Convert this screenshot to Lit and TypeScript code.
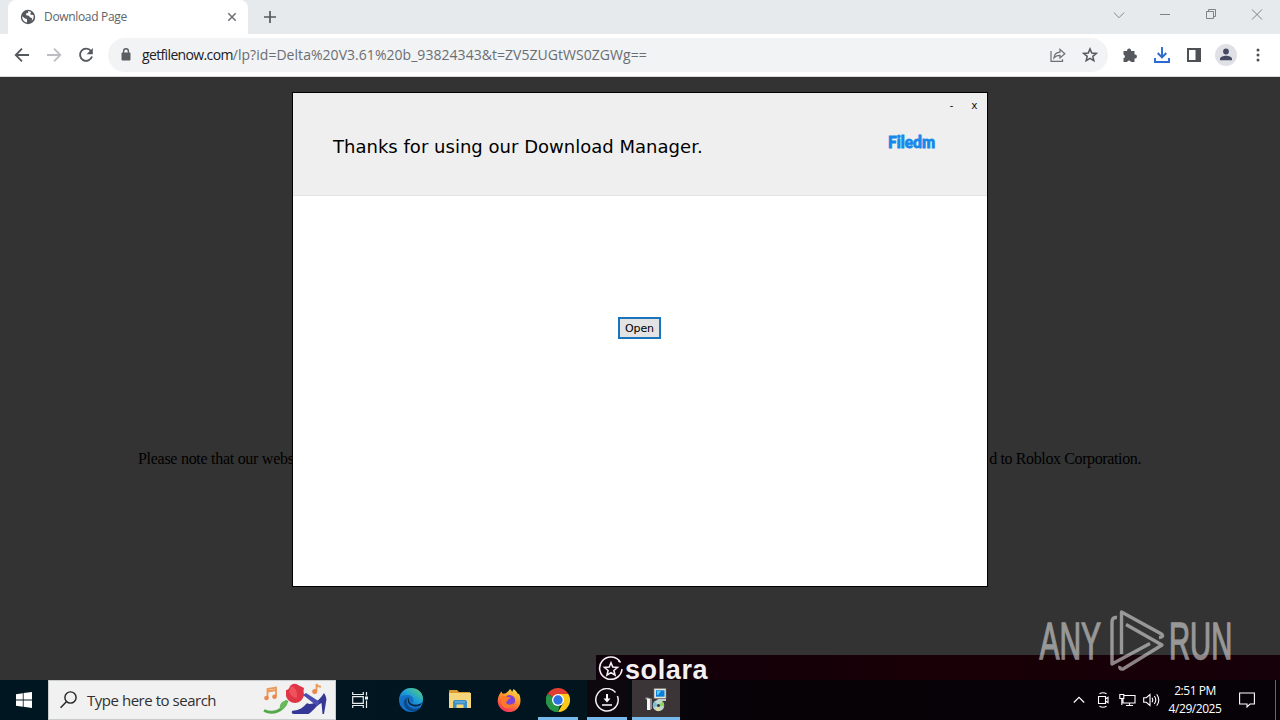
import { LitElement, html, css, svg } from "lit";
import { customElement } from "lit/decorators.js";

@customElement("browser-chrome")
class BrowserChrome extends LitElement {
  static styles = css`
    :host { display: block; font-family: "Open Sans", "Noto Sans", sans-serif; }
    svg { display: block; }
    .tabs { height: 34px; background: #e7eaed; display: flex; padding-left: 8px; }
    .tab { width: 240px; box-sizing: border-box; background: #fff; border-radius: 8px 8px 0 0; display: flex; align-items: center; padding: 0 8px 0 12px; }
    .title { margin-left: 8px; flex: 1; font-size: 12px; line-height: 16px; letter-spacing: -0.33px; color: #606368; white-space: nowrap; }
    .plus { width: 44px; display: grid; place-items: center; }
    .grow { flex: 1; }
    .ctl { width: 46px; height: 29px; display: grid; place-items: center; }
    .bar { height: 43px; box-sizing: border-box; background: #fff; border-bottom: 1px solid #d8dadd; display: flex; align-items: center; padding: 0 6px; }
    .cell { width: 32px; height: 32px; display: grid; place-items: center; flex: none; }
    .omni { margin: 0 6px; height: 34px; flex: 1; border-radius: 17px; background: #f1f3f4; display: flex; align-items: center; padding: 0 2px 0 12px; }
    .url { flex: 1; margin-left: 10px; font-size: 14px; line-height: 20px; color: #6a6e73; white-space: nowrap; }
    .host { color: #202124; letter-spacing: -0.64px; }
    .path { letter-spacing: 0.04px; }
  `;
  render() {
    return html`
      <div class="tabs">
        <div class="tab">
          <svg width="16" height="16" viewBox="0 0 16 16"><circle cx="8" cy="8" r="7.2" fill="#55595e"/><path d="M2.3 7.3L5 9.6 7 10v3.4C4 13.2 2 10.500 2.300 7.300zM8.300 2.100L8 4 6 4.600 6.200 6.300 8.800 6.800 10.200 8.500 12.200 9.200 11.600 11.800C13.400 10.500 14 8.300 13.400 6L10.800 5.800 10.300 4.500 11.200 3z" fill="#fff"/></svg>
          <div class="title">Download Page</div>
          <svg width="16" height="16" viewBox="0 0 16 16" stroke="#6b6f74" stroke-width="1.5"><path d="M4.300 4.300l7.400 7.400M11.700 4.300l-7.400 7.400"/></svg>
        </div>
        <div class="plus"><svg width="14" height="14" viewBox="0 0 14 14" stroke="#55595e" stroke-width="1.7"><path d="M7 1v12M1 7h12"/></svg></div>
        <div class="grow"></div>
        <div class="ctl"><svg width="12" height="12" viewBox="0 0 12 12" stroke="#85888c" fill="none"><path d="M.8 3.500l5.200 5.200 5.200-5.200"/></svg></div>
        <div class="ctl"><svg width="12" height="12" viewBox="0 0 12 12" stroke="#7e8185"><path d="M1 5.500h10"/></svg></div>
        <div class="ctl"><svg width="12" height="12" viewBox="0 0 12 12" stroke="#7e8185" fill="none"><path d="M1.500 2.500h7v7h-7zM3.500 2.500v-2h7v7h-2"/></svg></div>
        <div class="ctl"><svg width="12" height="12" viewBox="0 0 12 12" stroke="#7e8185"><path d="M1 .5l10 10M11 .5L1 10.500"/></svg></div>
      </div>
      <div class="bar">
        <div class="cell"><svg width="16" height="16" viewBox="0 0 16 16" fill="none" stroke="#55595e" stroke-width="1.800"><path d="M15 8H2M8 1.700L1.700 8 8 14.300"/></svg></div>
        <div class="cell"><svg width="16" height="16" viewBox="0 0 16 16" fill="none" stroke="#bcbec1" stroke-width="1.800"><path d="M1 8h13M8 1.700L14.300 8 8 14.300"/></svg></div>
        <div class="cell"><svg width="16" height="16" viewBox="0 0 16 16"><path d="M13 4A6.100 6.100 0 1 0 14 9.500" fill="none" stroke="#55595e" stroke-width="1.900"/><path d="M14.800 1v6.200H8.600z" fill="#55595e"/></svg></div>
        <div class="omni">
          <svg width="12" height="16" viewBox="0 0 12 16"><rect x="1.500" y="5.500" width="9" height="8" rx="1" fill="#5a5e63"/><path d="M3.600 6V4.200a2.400 2.400 0 0 1 4.800 0V6" fill="none" stroke="#5a5e63" stroke-width="1.400"/></svg>
          <div class="url"><span class="host">getfilenow.com</span><span class="path">/lp?id=Delta%20V3.61%20b_93824343&amp;t=ZV5ZUGtWS0ZGWg==</span></div>
          <div class="cell"><svg width="16" height="16" viewBox="0 0 16 16" fill="none" stroke="#6b6f74" stroke-width="1.200"><path d="M1 4v10.300h11.500v-2"/><path d="M4 11c.3-4 2.500-5.800 6-5.900V2.400l4.800 4.300L10 11V8.300C7.200 8.300 5.500 9 4 11z"/></svg></div>
          <div class="cell"><svg width="16" height="16" viewBox="0 0 16 16" fill="none" stroke="#55595e" stroke-width="1.500"><path d="M8 1.900l1.750 4.150 4.450.4-3.400 2.900 1.050 4.350L8 11.400l-3.850 2.300L5.200 9.350 1.800 6.450l4.450-.4z"/></svg></div>
        </div>
        <div class="cell"><svg width="16" height="16" viewBox="0 0 16 16" fill="#55595e"><path d="M1.500 4h3.700a2 2 0 1 1 3.800 0h3.500v3.500a2 2 0 1 1 0 3.900V15H9a2 2 0 0 0-3.900 0H1.500v-3.700a2 2 0 0 0 0-3.800z"/></svg></div>
        <div class="cell"><svg width="18" height="18" viewBox="0 0 18 18" fill="none" stroke="#2b68d0" stroke-width="1.900"><path d="M9 1v10M4.700 7L9 11.300 13.300 7M2 12v4h14v-4"/></svg></div>
        <div class="cell"><svg width="14" height="14" viewBox="0 0 14 14"><path d="M1 1h12v12H1z" fill="none" stroke="#4d5156" stroke-width="2"/><path d="M8.500 1H13v12H8.500z" fill="#4d5156"/></svg></div>
        <div class="cell"><svg width="22" height="22" viewBox="0 0 22 22"><circle cx="11" cy="11" r="11" fill="#dfe1e6"/><circle cx="11" cy="7.500" r="2.900" fill="#474b61"/><path d="M5 16.200v-1.300c0-2 3.500-3.200 6-3.200s6 1.200 6 3.200v1.300z" fill="#474b61"/></svg></div>
        <div class="cell"><svg width="4" height="14" viewBox="0 0 4 14" fill="#4d5156"><circle cx="2" cy="2" r="1.500"/><circle cx="2" cy="7" r="1.500"/><circle cx="2" cy="12" r="1.500"/></svg></div>
      </div>`;
  }
}

@customElement("download-dialog")
class DownloadDialog extends LitElement {
  static styles = css`
    :host { display: flex; flex-direction: column; box-sizing: border-box; border: 1px solid #000; background: #fff; font-family: "DejaVu Sans", sans-serif; color: #000; }
    .head { height: 103px; box-sizing: border-box; background: #efefef; border-bottom: 1px solid #e2e2e2; }
    .controls { display: flex; justify-content: flex-end; height: 22px; padding-right: 1px; margin-bottom: 2px; align-items: center; font-size: 11px; font-family: "Open Sans", sans-serif; }
    .controls span { width: 23px; text-align: center; }
    .row { display: flex; justify-content: space-between; padding: 0 50px 0 40px; height: 60px; }
    .title { font-size: 18px; line-height: 24px; padding-top: 18px; white-space: nowrap; letter-spacing: 0.02px; }
    .logo { display: block; margin-top: 10px; overflow: visible; }
    .body { flex: 1; display: flex; justify-content: center; align-items: flex-start; padding-top: 121px; }
    .open { box-sizing: border-box; width: 43px; height: 22px; margin-right: 1px; padding: 1px 0 0; border: 2px solid #1b75bc; background: #e3e3e3; font: 11px/17px "DejaVu Sans", sans-serif; color: #000; letter-spacing: -0.1px; }
  `;
  render() {
    return html`
      <div class="head">
        <div class="controls"><span>-</span><span>x</span></div>
        <div class="row">
          <div class="title">Thanks for using our Download Manager.</div>
          <svg class="logo" width="51" height="32" viewBox="0 0 51 32"><text x="2" y="21" textLength="47" lengthAdjust="spacingAndGlyphs" font-family="Lato, sans-serif" font-weight="900" font-size="16" fill="#1688ea" stroke="#1688ea" stroke-width=".9">Filedm</text></svg>
        </div>
      </div>
      <div class="body"><button class="open">Open</button></div>`;
  }
}

@customElement("page-view")
class PageView extends LitElement {
  static styles = css`
    :host { display: block; position: relative; background: #333; overflow: hidden; }
    .note { display: flex; justify-content: space-between; padding: 372px 139px 0 138px; font: 16px/20px "Liberation Serif", serif; color: #000; white-space: nowrap; }
    .left { letter-spacing: -0.28px; }
    .right { letter-spacing: -0.38px; }
    .banner { position: absolute; left: 596px; right: 0; bottom: 0; height: 25px; display: flex; overflow: hidden; background: linear-gradient(90deg, #10000a, #190006 50%, #160009); }
    .banner svg { flex: none; margin: 1px 0 0 2px; }
    .brand { font: bold 27px/31px "Liberation Sans", sans-serif; color: #f4f0f2; margin-left: 1px; letter-spacing: 0.6px; }
    download-dialog { position: absolute; left: 292px; top: 15px; width: 696px; height: 495px; }
    .mark { position: absolute; right: 45px; bottom: 6px; }
  `;
  render() {
    return html`
      <div class="note"><span class="left">Please note that our webs</span><span class="right">d to Roblox Corporation.</span></div>
      <div class="banner">
        <svg width="26" height="26" viewBox="0 0 26 26" fill="none" stroke="#f4f0f2" stroke-width="1.600"><path d="M22.500 6.500A11.200 11.200 0 1 0 24 13"/><path d="M20.500 4.600l1 1"/><path d="M13 6.800l1.800 4.300 4.700.4-3.600 3 1.100 4.600-4-2.500-4 2.500 1.100-4.600-3.600-3 4.700-.4z"/></svg>
        <div class="brand">solara</div>
      </div>
      <download-dialog></download-dialog>
      <svg class="mark" width="200" height="68" viewBox="1035 606 200 68" opacity=".58">
        <g fill="#e2e2e2" stroke="#e2e2e2" stroke-width="1.300" font-family="'Liberation Sans Narrow', 'Liberation Sans', sans-serif" font-size="51">
          <text transform="translate(1039.500 659) scale(.58 1)" textLength="106" lengthAdjust="spacingAndGlyphs">ANY</text>
          <text transform="translate(1169 659) scale(.58 1)" textLength="109" lengthAdjust="spacingAndGlyphs">RUN</text>
        </g>
        <g fill="none" stroke="#e2e2e2" stroke-width="3.400" stroke-linejoin="round">
          <path d="M1117 617.500q-5-.5-5 4.500v42l38-20.500"/>
          <path d="M1121.500 654v-42l40 22q3 3-2.500 3.500"/>
          <path d="M1126 624.500l36 20.500-39 24q-4 .5-3-3"/>
        </g>
      </svg>`;
  }
}

const edge = svg`<defs><linearGradient id="e" x1="0" y1="1" x2="1" y2="0"><stop offset="0" stop-color="#1465b8"/><stop offset=".5" stop-color="#1e9fd8"/><stop offset="1" stop-color="#62d66a"/></linearGradient></defs>
  <circle cx="12" cy="12" r="12" fill="#1471c6"/><path d="M.5 10C2 3 7 0 12 0c7 0 12 5 12 10.500 0 4-3 6-6.500 6-2.500 0-4-.8-4-1.700 0-.6 1-1.200 1-3 0-2.500-2.500-4.800-6.500-4.800C4.500 7 1.700 8 .5 10z" fill="url(#e)"/><path d="M10 9.500c-3 2-3 6 0 9 3 2.800 8 3 11.500.8C18 25 9 25 5.500 18 3.500 13 6 9.800 10 9.500z" fill="#0b4a8d"/><path d="M10.500 9.500c-1.500 2-.5 6 3.500 7 3 .8 6 .2 9-1.500-1 2-3 3-5 3.300-5 .7-9.500-2.300-9-6 .1-1.300.6-2.300 1.500-2.800z" fill="#06202f"/>`;
const folder = svg`<path d="M1 3q0-1 1-1h7l2 2h11v4H1z" fill="#dd9d2e"/><path d="M1 5h22v15H1z" fill="#f6d67c"/><path d="M5 20v-6q0-2 2-2h10q2 0 2 2v6h-3.500v-3.500h-7v3.500z" fill="#3c8fc6"/><path d="M7 14h10" stroke="#6db4dd" stroke-width="1.200"/>`;
const fox = svg`<defs><linearGradient id="f" x1=".8" y1="0" x2=".3" y2="1"><stop offset="0" stop-color="#ffe24a"/><stop offset=".45" stop-color="#ff9228"/><stop offset="1" stop-color="#f32d61"/></linearGradient></defs>
  <path d="M4.500 3.500c.2 1 .8 1.800 1.300 2.200L9 5.200C10 4 12 3 13 1c1 .8 2 2.200 2 3.300L16.500 1C19.500 3 20.500 5 21 6.500l.8-1C23 8 23.500 10 23.500 12.500A11.400 11.400 0 0 1 .7 13C.6 9 2.500 5.600 4.500 3.500z" fill="url(#f)"/><circle cx="12.500" cy="12.500" r="5.600" fill="#7c43d6"/><path d="M4 9.500C6 7.500 9 7.500 11 9.200l2.500.2c.4 1-2 1.800-2.500 2.100-.3 2-2 2-2 3 1 2.700 6 3 8 0-1 5-5 6.500-8.500 5.500C5 19 3 14 4 9.500z" fill="#ff7a27"/>`;
const chrome = svg`<path d="M12 12L1.600 6A12 12 0 0 1 22.400 6z" fill="#e23d31"/><path d="M12 12l0 12A12 12 0 0 1 1.600 6z" fill="#269547"/><path d="M12 6h10.400A12 12 0 0 1 12 24l5.200-9z" fill="#fbc919"/><path d="M1.600 6l5.200 9a6 6 0 0 0 7 2.700L12 24A12 12 0 0 1 1.600 6z" fill="#269547"/><circle cx="12" cy="12" r="6" fill="#fff"/><circle cx="12" cy="12" r="4.700" fill="#2d73e0"/>`;
const down = svg`<path d="M20.500 4.500A11.200 11.200 0 1 0 23.200 12q0-2-.8-4" fill="none" stroke="#f2f2f2" stroke-width="1.500"/><path d="M12 6v6" stroke="#fff" stroke-width="2"/><path d="M8.500 10.500h7L12 14.500z" fill="#fff"/><path d="M7 17h10" stroke="#fff" stroke-width="1.500"/>`;
const installer = svg`<path d="M10 .5h12v10H10z" fill="#e6e3d8" stroke="#777" stroke-width=".6"/><path d="M12 2.300h8.500v6.400H12z" fill="#087dda"/><path d="M13 3h4l-3 4h-1z" fill="#55d2ff"/><path d="M13 11h9v2h-7z" fill="#c9c9c2"/><path d="M1.500 9.500h3v2h-3z" fill="#999"/><path d="M3 10.500h3.500V22H3z" fill="#f5f5f5"/><path d="M6.500 10.500h1.500V21H6.500z" fill="#8e8e8e"/><circle cx="14.500" cy="17.500" r="5.700" fill="#bcd7cf"/><path d="M14.500 17.500l4-4a5.700 5.700 0 0 1 1.500 5z" fill="#8fd45c"/><path d="M14.500 17.500l-5 2a5.700 5.700 0 0 1 1-6z" fill="#7bbdd8"/><path d="M14.500 17.500l1 5.500a5.700 5.700 0 0 1-4-1z" fill="#e6d994"/><circle cx="14.500" cy="17.500" r="1.500" fill="#333"/>`;

@customElement("task-bar")
class TaskBar extends LitElement {
  static styles = css`
    :host { display: flex; height: 40px; background: linear-gradient(90deg, #001721 0, #00151f 560px, #03141b 596px, #08060c 640px, #060206 760px, #070207 100%); font-family: "Open Sans", "Noto Sans", sans-serif; color: #fff; }
    svg { display: block; }
    .start, .view { width: 48px; display: grid; place-items: center; flex: none; }
    .search { width: 288px; box-sizing: border-box; background: #f1f1f1; border: 1px solid #c9cccd; display: flex; align-items: center; padding: 0 8px 0 11px; color: #303030; flex: none; }
    .hint { flex: 1; margin-left: 10px; font-size: 15px; line-height: 20px; white-space: nowrap; letter-spacing: -0.47px; }
    .apps { display: flex; gap: 1px; margin-left: 3px; }
    .app { width: 48px; box-sizing: border-box; border-bottom: 3px solid transparent; padding-top: 3px; display: grid; place-items: center; }
    .run { width: 40px; margin: 0 4px; border-color: #76b9ed; }
    .dim { background: #0c080d; }
    .active { background: #3b3537; border-color: #76b9ed; }
    .grow { flex: 1; }
    .tray { display: flex; align-items: center; }
    .ti { width: 24px; display: grid; place-items: center; }
    .clock { width: 64px; text-align: center; font-size: 12px; line-height: 18px; white-space: nowrap; letter-spacing: -0.45px; }
    .note { width: 40px; display: grid; place-items: center; }
    .desk { width: 4px; height: 40px; border-left: 1px solid #67646a; margin-left: 8px; }
  `;
  render() {
    const app = (art: unknown, cls = "") => html`<div class="app ${cls}"><svg width="24" height="24" viewBox="0 0 24 24">${art}</svg></div>`;
    return html`
      <div class="start"><svg width="16" height="16" viewBox="0 0 16 16" fill="#fff"><path d="M0 2.300l6.800-1v6.300H0zM7.600 1.100L16 0v7.600H7.600zM0 8.400h6.800v6.300l-6.800-1zM7.600 8.400H16V16l-8.400-1.200z"/></svg></div>
      <div class="search">
        <svg width="17" height="18" viewBox="0 0 17 18" fill="none" stroke="#222" stroke-width="1.400"><circle cx="10.500" cy="6.500" r="5.600"/><path d="M6.600 10.500L.6 16.800"/></svg>
        <div class="hint">Type here to search</div>
        <svg width="64" height="36" viewBox="0 0 64 36">
          <g fill="none" stroke="#eb9855" stroke-width="1.800"><path d="M4.500 16V7l8.500-1.500v9M4.500 9.500l8.500-1.500"/><path d="M53.500 9V2q1 3 4.500 2.500"/></g>
          <g fill="#e8894f"><circle cx="3.500" cy="16" r="2.300"/><circle cx="11.500" cy="14.800" r="2.300"/><circle cx="51.700" cy="9.500" r="2.500"/></g>
          <path d="M1 28.500c9 4 19 1 23-10" fill="none" stroke="#56a84d" stroke-width="3"/><path d="M17 27c-1-5 2-8 7-9 1 5-1 8-7 9z" fill="#69b95a"/>
          <path d="M23 8q3 0 4-4 4-4 8-1l6 3q-1 3 0 7c-1 5-5 8-9 8s-8-3-9-7z" fill="#df3546"/><path d="M28 4q7 2 6 12-5 0-8-6z" fill="#f0525d"/>
          <path d="M29 29c6-1 10-2 14-7 1-1 2-1 3 0 7 0 11-5 15-11 2 3 3 6 2 9l-2 12h-1.500l-1-11c-5 2-8 8-13 11H31q-3 0-2-3z" fill="#353797"/><path d="M40 13l3-2 14 9-3 4z" fill="#4b4dae"/>
        </svg>
      </div>
      <div class="view"><svg width="17" height="16" viewBox="0 0 17 16" fill="none" stroke="#e9eeee" stroke-width="1.200"><path d="M.7 0v2.500h10.600V0M.7 16v-2.500h10.600V16M.7 4.700h10.600v6.600H.7zM14.500 0v3.500M14.500 8.500V16"/><path d="M13 4.500h3v3h-3z" fill="#e9eeee" stroke="none"/></svg></div>
      <div class="apps">${app(edge)}${app(folder)}${app(fox)}${app(chrome, "run")}${app(down, "run dim")}${app(installer, "active")}</div>
      <div class="grow"></div>
      <div class="tray">
        <div class="ti"><svg width="12" height="12" viewBox="0 0 12 12" fill="none" stroke="#fff" stroke-width="1.200"><path d="M.8 8.500L6 3.300l5.200 5.200"/></svg></div>
        <div class="ti"><svg width="14" height="16" viewBox="0 0 14 16" fill="none" stroke="#fff" stroke-width="1.100"><path d="M3.500 1.800q3.500-2 7 0M3.500 14.200q3.500 2 7 0M2.500 4.500h7v7h-7zM9.500 7l2.500-1.800v5.600l-2.500-1.800"/></svg></div>
        <div class="ti"><svg width="17" height="16" viewBox="0 0 17 16" fill="none" stroke="#fff" stroke-width="1.100"><path d="M5 3.500h11v7.500H4V7M7 13.500h7M10.500 11v2.500M.8 2.500h4v4h-4zM2.800 6.500v6.500"/></svg></div>
        <div class="ti"><svg width="17" height="14" viewBox="0 0 17 14" fill="none" stroke="#fff" stroke-width="1.100"><path d="M.7 4.700h2.600L7 1.500v11L3.300 9.300H.7zM9 4.800q1.500 2.200 0 4.400M11.300 3q3 4 0 8M13.700 1.200q4.200 5.800 0 11.600"/></svg></div>
        <div class="clock">2:51 PM<br>4/29/2025</div>
        <div class="note"><svg width="16" height="16" viewBox="0 0 16 16" fill="none" stroke="#fff" stroke-width="1.100"><path d="M.6 1h14.800v11H11l-3 3v-3H.6z"/></svg></div>
        <div class="desk"></div>
      </div>`;
  }
}

@customElement("app-root")
class AppRoot extends LitElement {
  static styles = css`
    :host { display: flex; flex-direction: column; width: 1280px; height: 720px; overflow: hidden; }
    page-view { flex: 1; }
  `;
  render() {
    return html`<browser-chrome></browser-chrome><page-view></page-view><task-bar></task-bar>`;
  }
}
